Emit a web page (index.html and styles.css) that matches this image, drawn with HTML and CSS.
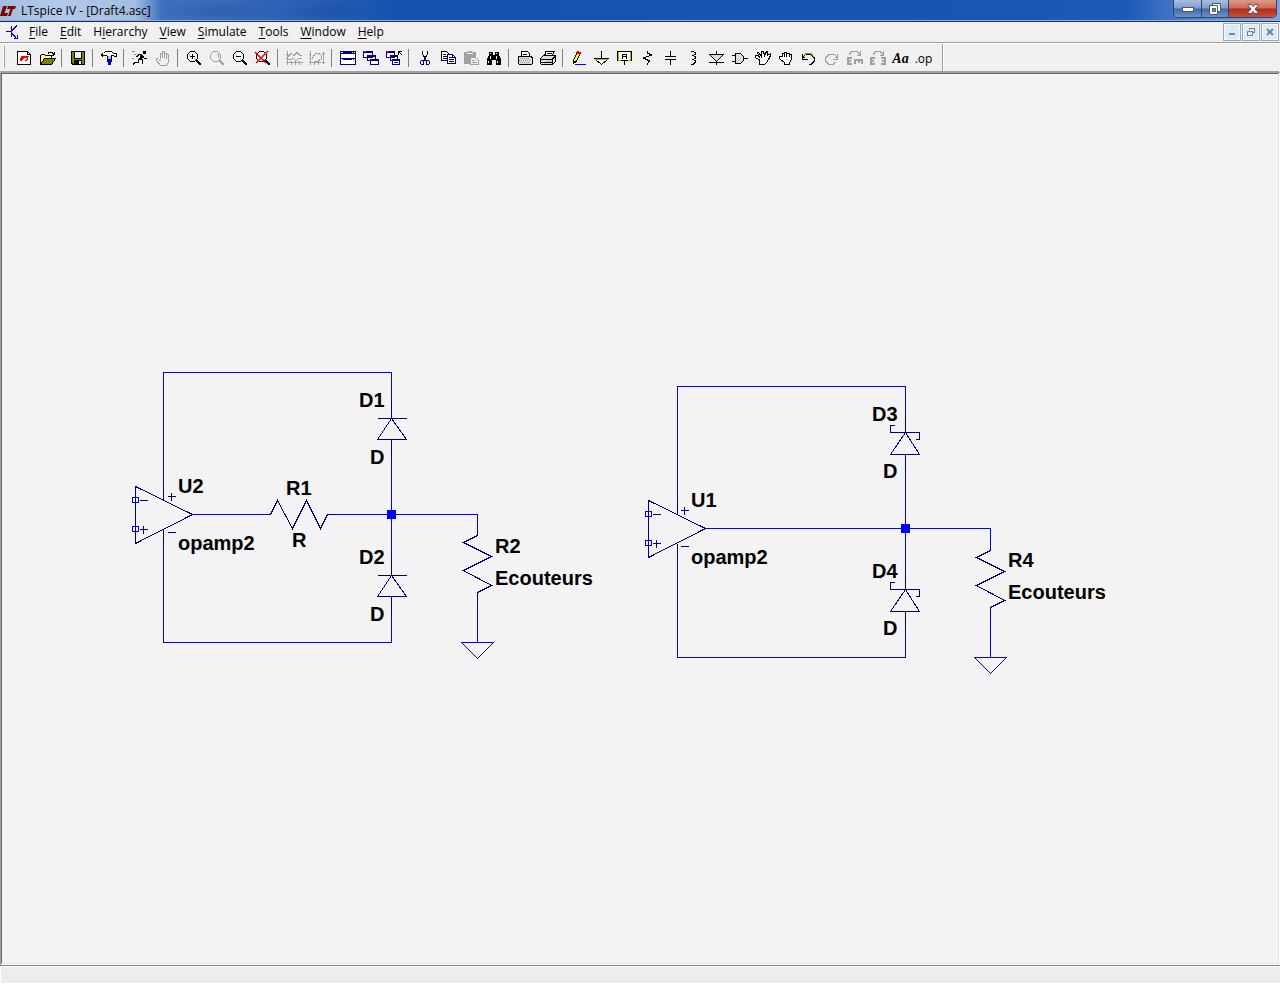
FILE: index.html
```
<!DOCTYPE html>
<html lang="en">
<head>
<meta charset="utf-8" />
<title>LTspice IV - [Draft4.asc]</title>
<link rel="stylesheet" href="styles.css">
</head>

<body>
<div class="titlebar">
	<svg class="logo" width="16" height="14" viewBox="0 0 16 14"><path d="M3 2h4L4.500 9H8l-1 3H0z M8 2h8l-1 3h-2l-2.500 7H8l2.500-7H7z"/></svg>
	<span class="caption">LTspice IV - [Draft4.asc]</span>
	<div class="winbtns">
		<button class="min" aria-label="Minimize"><svg width="14" height="8" viewBox="0 0 14 8"><rect x="1.5" y="2.5" width="11" height="4" fill="#fff" stroke="#4b5670"/></svg></button>
		<button class="max" aria-label="Restore"><svg width="14" height="14" viewBox="0 0 14 14"><path d="M4.500 1.500h8v8h-8z" fill="#fff" stroke="#4b5670"/><path d="M1.500 3.500h8v9h-8z" fill="#fff" stroke="#4b5670"/><path d="M4.500 6.500h3v3h-3z" fill="#6f8fc0" stroke="#4b5670"/></svg></button>
		<button class="shut" aria-label="Close"><svg width="14" height="12" viewBox="0 0 14 12"><path d="M2 1.500h3l2 2 2-2h3v1l-3 3.500 3 3.500v1H9l-2-2-2 2H2v-1L5 6 2 2.500z" fill="#fff" stroke="#5a4450"/></svg></button>
	</div>
</div>

<div class="menubar">
	<svg class="doc" width="14" height="18" viewBox="0 0 14 18"><path d="M1 8.500h5M6.500 3v11M7 7.500l5-5M7 10.500l4 4M9 15.500h3v-4" stroke="#00f"/></svg>
	<button><u>F</u>ile</button>
	<button><u>E</u>dit</button>
	<button>H<u>i</u>erarchy</button>
	<button><u>V</u>iew</button>
	<button><u>S</u>imulate</button>
	<button><u>T</u>ools</button>
	<button><u>W</u>indow</button>
	<button><u>H</u>elp</button>
	<div class="docbtns">
		<button aria-label="Minimize document"><svg width="10" height="10" viewBox="0 0 10 10"><path d="M2 7h6" stroke="#75849a" stroke-width="2"/></svg></button>
		<button aria-label="Restore document"><svg width="10" height="10" viewBox="0 0 10 10"><path d="M3.500 3V1.500h5v4H7M3 1h6M1.500 4.500h5v4h-5zM1 4h6" stroke="#75849a"/></svg></button>
		<button aria-label="Close document"><svg width="10" height="10" viewBox="0 0 10 10"><path class="soft" d="M2 2l6 6M8 2L2 8" stroke="#75849a" stroke-width="2"/></svg></button>
	</div>
</div>

<div class="toolbar">
	<i class="grip"></i>
	<button aria-label="New schematic"><svg width="16" height="16" viewBox="0 0 16 16"><path d="M1.500.500h10l3 3v10h-13z" fill="#fff"/><path d="M11.500 1v2.500h3"/><path d="M5 5h8l-2 5H8l1-1h1l1-2H8l-2 3H3l1-1z" fill="#f00" stroke="none"/></svg></button>
	<button aria-label="Open"><svg width="17" height="16" viewBox="0 0 17 16"><path d="M1.500 13V4.500l1-1h3l1 1h6V7" fill="#ffff80"/><path d="M1.500 13.500l4-6h11l-4 6z" fill="#808000"/><path d="M9 2.500l1-1h3l2 2M15.500 1v3M13 4.500h2"/></svg></button>
	<i class="sep"></i>
	<button aria-label="Save"><svg width="16" height="16" viewBox="0 0 16 16"><path d="M1.500.500h13v13H3l-1.500-1.500z" fill="#808000"/><path d="M4.500 1v6h7V1" fill="#efefef"/><path d="M4 9h8v5H4z" fill="#000" stroke="none"/><path d="M9 10h2v3H9z" fill="#efefef" stroke="none"/></svg></button>
	<i class="sep"></i>
	<button aria-label="Control panel"><svg width="17" height="16" viewBox="0 0 17 16"><path d="M.500 3.500l2-1 2-2h6l2 2h3v3h-2l-1-1h-2l-1 1h-3l-1-1h-3l-1 1z" fill="#fff"/><path d="M6.500 5v3M10.500 5v3"/><path d="M6 8h5v3h-1v3H7v-3H6z" fill="#00c" stroke="none"/><path d="M7 5h3v3H7z" fill="#bbb" stroke="none"/></svg></button>
	<i class="sep"></i>
	<button aria-label="Run"><svg width="16" height="16" viewBox="0 0 16 16"><path d="M11 0h3v3h-3zM8 4h3v1l-1 4H7l1-3z" fill="#000" stroke="none"/><path d="M6 3.500h4M4.500 6l2-2M11 5l1 2h3M8 8.500h2.500v4l1 1M7 8.500l-1 3H3l-2 2"/><path d="M0 .500h3M2 3.500h2M0 7.500h2" stroke="#888"/></svg></button>
	<button class="off" aria-label="Halt"><svg width="16" height="16" viewBox="0 0 16 16"><path d="M5.500 10L2 7.500H1.500v2l4 5h6l2-3v-8h-1l-1 1V8M5.500 8V2.500h1l1 1V7M7.500 3V.500h2V7M9.500 2.500h2V8"/></svg></button>
	<i class="sep"></i>
	<button aria-label="Zoom in"><svg width="17" height="16" viewBox="-1 0 17 16"><path d="M3.500.500h4l3 3v4l-3 3h-4l-3-3v-4z" fill="#fff"/><path d="M2 3h2v2H2zM7 7h2v2H7z" fill="#7ff" stroke="none"/><path d="M3 5.500h5M5.500 3v5"/><path d="M9 9l5 5" stroke-width="2"/></svg></button>
	<button class="off" aria-label="Zoom pan"><svg width="17" height="16" viewBox="-1 0 17 16"><path d="M3.500.500h4l3 3v4l-3 3h-4l-3-3v-4zM7 3.500h1v3"/><path d="M9 9l5 5" stroke-width="2"/></svg></button>
	<button aria-label="Zoom out"><svg width="17" height="16" viewBox="-1 0 17 16"><path d="M3.500.500h4l3 3v4l-3 3h-4l-3-3v-4z" fill="#fff"/><path d="M2 3h2v2H2zM7 7h2v2H7z" fill="#7ff" stroke="none"/><path d="M3 5.500h5"/><path d="M9 9l5 5" stroke-width="2"/></svg></button>
	<button aria-label="Zoom full extents"><svg width="17" height="16" viewBox="-1 0 17 16"><path d="M3.500.500h4l3 3v4l-3 3h-4l-3-3v-4z" fill="#fff"/><path d="M2 4h2v2H2zM7 7h2v2H7z" fill="#7ff" stroke="none"/><path d="M9 9l5 5" stroke-width="2"/><path class="soft" d="M-1 1l11 11M12 0L0 12" stroke="#e00" stroke-width="1.500"/></svg></button>
	<i class="sep"></i>
	<button class="off" aria-label="Autorange"><svg width="17" height="16" viewBox="0 0 17 16"><path d="M1.500 0v14M0 3.500h2M0 7.500h2M0 11.500h17M2 5.500l3-3 3 2 3-3 3 3h2M2 8.500h3l2-1 3 2 3-2h3M5.500 10v4M9.500 10v4M13.500 10v4"/></svg></button>
	<button class="off" aria-label="Plot settings"><svg width="17" height="16" viewBox="0 0 17 16"><path d="M1.500 0v14M0 3.500h2M0 7.500h2M0 11.500h12M3 8l3-5 3-1 3 2v4l-3 2H6M5.500 10v4M9.500 10v4M14.500 1v12M13 2.500h3M13 11.500h3"/></svg></button>
	<i class="sep"></i>
	<button class="win" aria-label="Tile windows"><svg width="17" height="16" viewBox="0 0 17 16"><path d="M.500 .500h15v13H.500z" fill="#fff"/><path d="M0 1.500h16M0 2.500h16M0 7.500h16M0 8.500h16"/><path d="M1 1.500h2M12 1.500h1M14 1.500h1M1 8.500h2M12 8.500h1M14 8.500h1" stroke="#fff"/></svg></button>
	<button class="win" aria-label="Cascade windows"><svg width="17" height="16" viewBox="0 0 17 16"><path d="M.500 .500h9v6h-9zM4.500 4.500h8v5h-8zM7.500 8.500h8v5h-8z" fill="#fff"/><path d="M0 1h10M4 5h9M7 9h9" stroke-width="2"/><path d="M1 .500h2" stroke="#f08"/></svg></button>
	<button class="win" aria-label="Close all windows"><svg width="17" height="16" viewBox="0 0 17 16"><path d="M.500 .500h8v6h-8zM4.500 4.500h7v5h-7zM6.500 8.500h7v5h-7z" fill="#fff"/><path d="M0 1h9M4 5h8M6 9h8" stroke-width="2"/><path d="M8 11.500h4"/><path d="M1 .500h2" stroke="#f08"/><path d="M12.500 4V.500H16M13 1l3 3" stroke="#000"/></svg></button>
	<i class="sep"></i>
	<button aria-label="Cut"><svg width="16" height="16" viewBox="0 0 16 16"><path d="M5.500 0v3l3 5M10.500 0v3l-3 5"/><path d="M7.500 7v2l-2 1M8.500 7v2l2 1M4.500 9.500h2v4h-2l-1-1v-2zM9.500 9.500h2l1 1v2l-1 1h-2z" stroke="#000080"/></svg></button>
	<button aria-label="Copy"><svg width="16" height="16" viewBox="0 0 16 16"><path d="M1.500.500h5l2 2v7h-7z" fill="#fff"/><path d="M3 3.500h3M3 5.500h4M3 7.500h4"/><path d="M7.500 3.500h5l3 3v6h-8z" fill="#fff" stroke="#000080"/><path d="M9 6.500h3M9 8.500h5M9 10.500h5M12.500 4v2h2" stroke="#000080"/></svg></button>
	<button class="off" aria-label="Paste"><svg width="16" height="16" viewBox="0 0 16 16"><path d="M1 1h4V0h4v1h4v12H1z" fill="#a0a0a0" stroke="none"/><path d="M4 2.500h6" stroke="#efefef"/><path d="M7.500 6.500h5l3 3v4h-8z" fill="#efefef"/><path d="M9 9.500h3M9 11.500h5"/></svg></button>
	<button aria-label="Find"><svg width="16" height="16" viewBox="0 0 16 16"><path d="M3 1h4v3h2V1h4v3l2 4v6h-5V9H6v5H1V8l2-4z" fill="#000" stroke="none"/><path d="M4.500 2v1M10.500 2v1M4.500 5v3M10.500 5v3M2.500 10v2M11.500 10v2" stroke="#fff"/></svg></button>
	<i class="sep"></i>
	<button aria-label="Print setup"><svg width="17" height="16" viewBox="0 0 17 16"><path d="M4.500 6V.500h6l2 2V6" fill="#fff"/><path d="M1.500 5.500h13l1 2v5l-1 1h-12l-1-1z" fill="#ddd"/><path d="M3 7.500h10M2 9.500h12M3 11.500h10" stroke="#999" stroke-dasharray="1 1"/><path d="M6 3.500h4"/></svg></button>
	<button aria-label="Print"><svg width="17" height="16" viewBox="0 0 17 16"><path d="M4.500 5l1.500-4.500h8L12 6" fill="#fff"/><path d="M.500 7.500l3-3h12v6l-3 3h-11l-1-1z" fill="#ddd"/><path d="M1 8.500h11l3-3M1 11.500h11M7 2.500h5M6 4.500h5M12.500 8v5"/><path d="M7 10.500h4" stroke="#cc0"/></svg></button>
	<i class="sep"></i>
	<button aria-label="Wire"><svg width="17" height="16" viewBox="0 0 17 16"><path d="M2.500 12.500v-3l4-9 3 1-4 9z" fill="#ff0"/><path d="M6 0l4 1-1 3-4-2z" fill="#e00" stroke="none"/><path d="M2 10h3l-3 4z" fill="#000" stroke="none"/><path d="M4 13.500h11" stroke="#00f"/></svg></button>
	<button aria-label="Ground"><svg width="17" height="16" viewBox="0 0 17 16"><path d="M7.500 0v7M0 7.500h15"/><path d="M1.500 8.500h12l-6 5z" fill="#fff"/><path d="M1 8.500h13" stroke="#aa0"/></svg></button>
	<button aria-label="Label net"><svg width="17" height="16" viewBox="0 0 17 16"><path d="M.500 .500h14v9h-14z" fill="#fff"/><path d="M1.500 1v8M13.500 1v8M1 9.500h3M11 9.500h3" stroke="#aa0"/><path d="M5.500 8V3.500h4V8M6 5.500h3M7.500 10v4"/></svg></button>
	<button aria-label="Resistor"><svg width="17" height="16" viewBox="0 0 17 16"><path d="M7.500 0v2l4 2-8 3 6 3-2 2.500v1.500"/></svg></button>
	<button aria-label="Capacitor"><svg width="17" height="16" viewBox="0 0 17 16"><path d="M7.500 0v5M2 5.500h11M2 8.500h11M7.500 9v5"/></svg></button>
	<button aria-label="Inductor"><svg width="17" height="16" viewBox="0 0 17 16"><path d="M5 .500h2l2 1v2l-2 1H6M7 4.500l2 1v2l-2 1H6M7 8.500l2 1v2l-2 2H5"/></svg></button>
	<button aria-label="Diode"><svg width="17" height="16" viewBox="0 0 17 16"><path d="M7.500 0v3M7.500 11v3M0 11.500h15"/><path d="M.500 3.500h14l-7 7z" fill="#ddd"/></svg></button>
	<button aria-label="Component"><svg width="17" height="16" viewBox="0 0 17 16"><path d="M3.500 2.500h5l3 3v4l-3 3h-5z" fill="#ddd"/><path d="M0 4.500h4M0 10.500h4M12 7.500h4"/></svg></button>
	<button aria-label="Move"><svg width="17" height="16" viewBox="0 0 17 16"><path d="M4.500 9L.500 6.500v-2h2l2 2-2-5h1l3 4V.500h2l1 4 2-4h1v4l3-2v2l-2 4-2 3-2 2h-5z" fill="#fff"/><path d="M6.500 5v2M9.500 4v2"/></svg></button>
	<button aria-label="Drag"><svg width="17" height="16" viewBox="0 0 17 16"><path d="M4.500 10L1.500 7.500v-2h3v-3h2v-1h2v1h3v1h2v5l-2 3v2h-5v-2z" fill="#fff"/><path d="M6.500 3v3M8.500 3v3M11.500 4v2"/></svg></button>
	<button aria-label="Undo"><svg width="17" height="16" viewBox="0 0 17 16"><path d="M2.500 6l2-3h5l4 4v3l-3 3h-3"/><path d="M4 4l1-1.500h5L13 6" stroke="#990"/><path d="M1.500 3v5H7M2 6.500h2"/></svg></button>
	<button class="off" aria-label="Redo"><svg width="17" height="16" viewBox="0 0 17 16"><path d="M12.500 6l-2-3h-5l-4 4v3l3 3h5l2-2M13.500 3v5H9M11 6.500h2"/></svg></button>
	<button class="off" aria-label="Rotate"><svg width="17" height="16" viewBox="0 0 17 16"><path d="M2 3.500l3-3h5l3 3M13.500 0v4H10"/><path d="M1 6v8M0 7h5M0 10h4M0 13h5M7 9h9M8 9v4M12 8v4M15 8v5" stroke-width="2"/></svg></button>
	<button class="off" aria-label="Mirror"><svg width="17" height="16" viewBox="0 0 17 16"><path d="M3 3.500l3-3h4l3 3M13.500 0v4H10"/><path d="M1 6v8M0 7h5M0 10h4M0 13h5M15 6v8M11 7h5M12 10h4M11 13h5" stroke-width="2"/></svg></button>
	<button class="txt italic" aria-label="Text">Aa</button>
	<button class="txt" aria-label="SPICE directive">.op</button>
	<i class="end"></i>
</div>

<div class="sheet">
	<svg class="schematic">
		<defs>
			<g id="opamp">
				<path class="sym" d="M0 0v57l57-29zM4 14h8M4 43h8M8 39v8M32 10h8M36 6v8M32 46h8"/>
				<path class="wire" d="M-3 11h6v5h-6zM-3 40h6v5h-6z"/>
			</g>
			<path id="res" class="sym" d="M0-5V0l-14 7 28 14-28 14 28 15-14 7v8"/>
			<path id="diode" class="sym" d="M0-18V0M-14 0h29M0 0l-14 21h29L0 0M0 21v18"/>
			<path id="schottky" class="sym" d="M0-18V0M-11-7h-4v7h29v7h-4M0 0l-15 22h29L0 0M0 22v17"/>
			<path id="gnd" class="wire" d="M-16 0h32L0 16z"/>
			<rect id="node" x="-4" y="-4" width="9" height="9"/>
		</defs>

		<!-- left circuit, with series resistor -->
		<g transform="translate(-1.500 -73.500)">
			<path class="wire" d="M163 490V372h228v28M163 539v103h228v-28M192 514h73M334 514h143v16M391 457v101M477 599v43"/>
			<path class="sym" d="M163 490v10M163 529v10M265 514h5l7-14 15 28 14-28 14 28 7-14h7"/>
			<use href="#opamp" x="135" y="486"/>
			<use href="#diode" x="391" y="418"/>
			<use href="#diode" x="391" y="575"/>
			<use href="#res" x="477" y="535"/>
			<use href="#gnd" x="477" y="642"/>
		</g>
		<g transform="translate(-2 -74)">
			<use class="dot" href="#node" x="391" y="514"/>
			<text x="359" y="407">D1</text>
			<text x="370" y="464">D</text>
			<text x="178" y="493">U2</text>
			<text x="178" y="550">opamp2</text>
			<text x="286" y="495">R1</text>
			<text x="292" y="547">R</text>
			<text x="359" y="564">D2</text>
			<text x="370" y="621">D</text>
			<text x="495" y="553">R2</text>
			<text x="495" y="585">Ecouteurs</text>
		</g>

		<!-- right circuit, schottky clamps -->
		<g transform="translate(-1.500 -73.500)">
			<path class="wire" d="M677 504V386h228v28M677 553v104h228v-29M705 528h285v17M905 471v101M990 614v43"/>
			<path class="sym" d="M677 504v10M677 543v10"/>
			<use href="#opamp" x="648" y="500"/>
			<use href="#schottky" x="905" y="432"/>
			<use href="#schottky" x="905" y="589"/>
			<use href="#res" x="990" y="550"/>
			<use href="#gnd" x="990" y="657"/>
		</g>
		<g transform="translate(-2 -74)">
			<use class="dot" href="#node" x="905" y="528"/>
			<text x="872" y="421">D3</text>
			<text x="883" y="478">D</text>
			<text x="691" y="507">U1</text>
			<text x="691" y="564">opamp2</text>
			<text x="872" y="578">D4</text>
			<text x="883" y="635">D</text>
			<text x="1008" y="567">R4</text>
			<text x="1008" y="599">Ecouteurs</text>
		</g>
	</svg>
</div>
<div class="status"></div>
</body>
</html>
```
FILE: styles.css
```
*{margin:0; padding:0; box-sizing:border-box;}
body{height:100vh; display:flex; flex-direction:column; overflow:hidden; background:#f0f0f0; font:12px/16px "Open Sans","Noto Sans",sans-serif; color:#000;}
button{border:0; background:none; font:inherit; color:inherit;}
svg{display:block; fill:none; stroke:#000; stroke-width:1; shape-rendering:crispEdges;}
.soft{shape-rendering:auto;}

/* title bar */
.titlebar{flex:none; height:22px; display:flex; align-items:flex-start; border-bottom:1px solid #1b2f55; box-shadow:inset 0 -1px #8fb0e4;
	background:radial-gradient(ellipse 62px 8px at 215px 11px,rgba(20,50,110,.2),transparent),
		radial-gradient(ellipse 50px 8px at 328px 11px,rgba(20,50,110,.2),transparent),
		linear-gradient(90deg,#a3bce2 0,#b4c9e8 60px,#a3bde3 135px,#3f70bd 162px,#2d62b6 280px,#1552ae 400px,#1956b3 1000px,#1c58b6 88%,#5b87cd 94%,#7fa3db 100%);}
.logo{margin-top:4px; stroke:none; fill:#800000; shape-rendering:auto;}
.caption{margin-left:5px; padding-top:3px;}
.winbtns{margin:0 3px 0 auto; height:18px; display:flex; border:1px solid #2f446c; border-top:0; border-radius:0 0 5px 5px; overflow:hidden;}
.winbtns button{display:flex; align-items:center; justify-content:center; width:27px; background:linear-gradient(#a9bfe0,#7f9dcb 48%,#4468a8 52%,#6f93cb);}
.winbtns .max{border-left:1px solid #2f446c;}
.winbtns .shut{width:48px; border-left:1px solid #2f446c; background:linear-gradient(#dd9a8c,#cc6a56 48%,#b22d18 52%,#c8503a);}
.winbtns svg{shape-rendering:auto;}

/* menu bar */
.menubar{flex:none; height:22px; display:flex; align-items:flex-start; padding:1px 1px 0 5px; border-bottom:1px solid #fff; box-shadow:inset 0 -1px #a0a0a0;}
.menubar u{text-underline-offset:2px;}
.menubar > button{padding:0 6px; height:18px;}
.doc{margin-right:4px;}
.docbtns{margin-left:auto; display:flex; gap:1px;}
.docbtns button{width:18px; height:18px; display:flex; align-items:center; justify-content:center; border:1px solid #98a9bd; background:#dce9f7; box-shadow:inset 0 0 0 1px #f2f7fc;}

/* toolbar */
.toolbar{flex:none; height:28px; display:flex; align-items:flex-start; padding-left:3px;}
.toolbar button{flex:none; width:23px; height:24px; padding:6px 0 0 4px;}
.toolbar svg{overflow:visible;}
.off svg{stroke:#a0a0a0;}
.win svg{stroke:#000080;}
.toolbar .txt{padding:6px 0 0; font:12px/16px "Open Sans","Noto Sans",sans-serif; text-align:center;}
.toolbar .italic{font:italic bold 14px/16px "Liberation Serif",serif;}
.grip{width:2px; height:22px; margin:2px 7px 0 0; border-right:1px solid #a0a0a0; border-left:1px solid #fff;}
.sep{width:1px; height:18px; margin:5px 4px 0 3px; background:#808080;}
.end{width:2px; height:28px; margin-left:7px; background:#a0a0a0; border-right:1px solid #fff;}

/* drawing area */
.sheet{flex:1; min-height:0; margin:1px; border:1px solid #696969; border-right-color:#e3e3e3; border-bottom-color:#e3e3e3; background:#f3f3f3; box-shadow:0 0 0 1px #fff,-1px -1px 0 1px #a0a0a0; position:relative;}
.sheet:before{content:""; position:absolute; left:-2px; top:-2px; right:-2px; bottom:-2px; border:solid #a0a0a0; border-width:1px 0 0 1px;}
.schematic{width:100%; height:100%;}
.wire{stroke:#00f;}
.sym{stroke:#000080;}
.dot{fill:#00f; stroke:none;}
.schematic text{font:bold 20px "Liberation Sans",Arial,sans-serif; fill:#000; stroke:none;}

.status{flex:none; height:19px; border-top:1px solid #808080; border-bottom:1px solid #fff; box-shadow:inset 1px 1px #fff; background:#f0ecec;}
```
